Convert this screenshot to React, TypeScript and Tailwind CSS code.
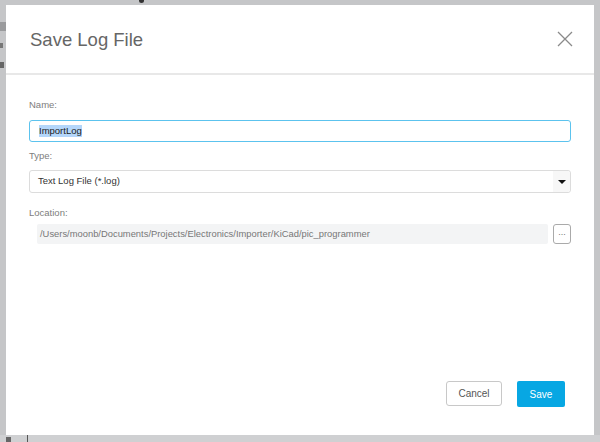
const font = { fontFamily: '"Liberation Sans", Arial, Helvetica, sans-serif' };

function Label({ children, className = "" }: { children: React.ReactNode; className?: string }) {
  return <div className={`h-3 text-[9.5px] leading-3 text-[#7d7d7d] ${className}`}>{children}</div>;
}

function CloseIcon() {
  return (
    <svg width="16" height="16" viewBox="0 0 16 16" className="text-[#8a8a8a]">
      <path d="M1 1 L15 15 M15 1 L1 15" stroke="currentColor" strokeWidth="1.3" fill="none" />
    </svg>
  );
}

export default function App() {
  return (
    <div
      className="relative h-[442px] w-[600px] overflow-hidden bg-[#c5c6c8] pl-[6px] pt-[5px]"
      style={font}
    >
      {/* bits of the window behind the modal */}
      <div className="absolute left-[139px] top-0 h-[3px] w-[5px] rounded-b-full bg-[#333]" />
      <div className="absolute left-0 top-[22px] h-[9px] w-[6px] bg-[#9a9b9d]" />
      <div className="absolute left-0 top-[43px] h-[5px] w-[3px] bg-[#777]" />
      <div className="absolute left-0 top-[62px] h-[6px] w-[4px] bg-[#666]" />
      <div className="absolute bottom-0 left-0 h-[7px] w-full bg-[#cfd0d2]" />
      <div className="absolute bottom-0 left-[27px] h-[7px] w-px bg-[#555]" />
      <div className="absolute bottom-0 left-[6px] h-[5px] w-[5px] bg-[#666]" />

      <div className="relative flex h-[430px] w-[588px] flex-col bg-white">
        <div className="flex h-[70px] items-center justify-between border-b-2 border-[#e8e8e8] pl-[24px] pr-[21px]">
          <h1 className="pt-[1px] text-[18.5px] text-[#666]">Save Log File</h1>
          <CloseIcon />
        </div>

        <div className="flex-1 px-[23px] pt-[24px]">
          <Label>Name:</Label>
          <div className="mt-[9px] flex h-[22px] items-center rounded-[3px] border border-[#5cc3ee] px-[9px]">
            <span className="bg-[#b4d6fa] text-[9.5px] leading-[12px] text-[#222]">ImportLog</span>
          </div>

          <Label className="mt-[8px]">Type:</Label>
          <div className="mt-[8px] flex h-[23px] items-center justify-between rounded-[3px] border border-[#dcdcdc] pl-[8px]">
            <span className="text-[9.5px] text-[#333]">Text Log File (*.log)</span>
            <div className="flex h-full w-[17px] items-center justify-center rounded-r-[3px] bg-[#f7f7f7]">
              <div className="h-0 w-0 border-x-[4px] border-t-[4px] border-x-transparent border-t-[#111]" />
            </div>
          </div>

          <Label className="mt-[14px]">Location:</Label>
          <div className="mt-[5px] flex h-[20px] items-center gap-[5px] pl-[8px]">
            <div className="flex h-full flex-1 items-center rounded-[2px] bg-[#f3f4f5] pl-[3px] text-[9.4px] text-[#777]">
              /Users/moonb/Documents/Projects/Electronics/Importer/KiCad/pic_programmer
            </div>
            <button className="flex h-[20px] w-[18px] items-center justify-center rounded-[3px] border border-[#aaa] bg-white pb-[3px] text-[9px] leading-none text-[#777]">
              ...
            </button>
          </div>
        </div>

        <div className="flex justify-end gap-[15px] pb-[28px] pr-[29px]">
          <button className="h-[25px] w-[56px] rounded-[3px] border border-[#c8c8c8] bg-white text-[10px] text-[#555]">
            Cancel
          </button>
          <button className="h-[26px] w-[48px] rounded-[2px] bg-[#07a7e3] text-[10px] text-white">
            Save
          </button>
        </div>
      </div>
    </div>
  );
}
